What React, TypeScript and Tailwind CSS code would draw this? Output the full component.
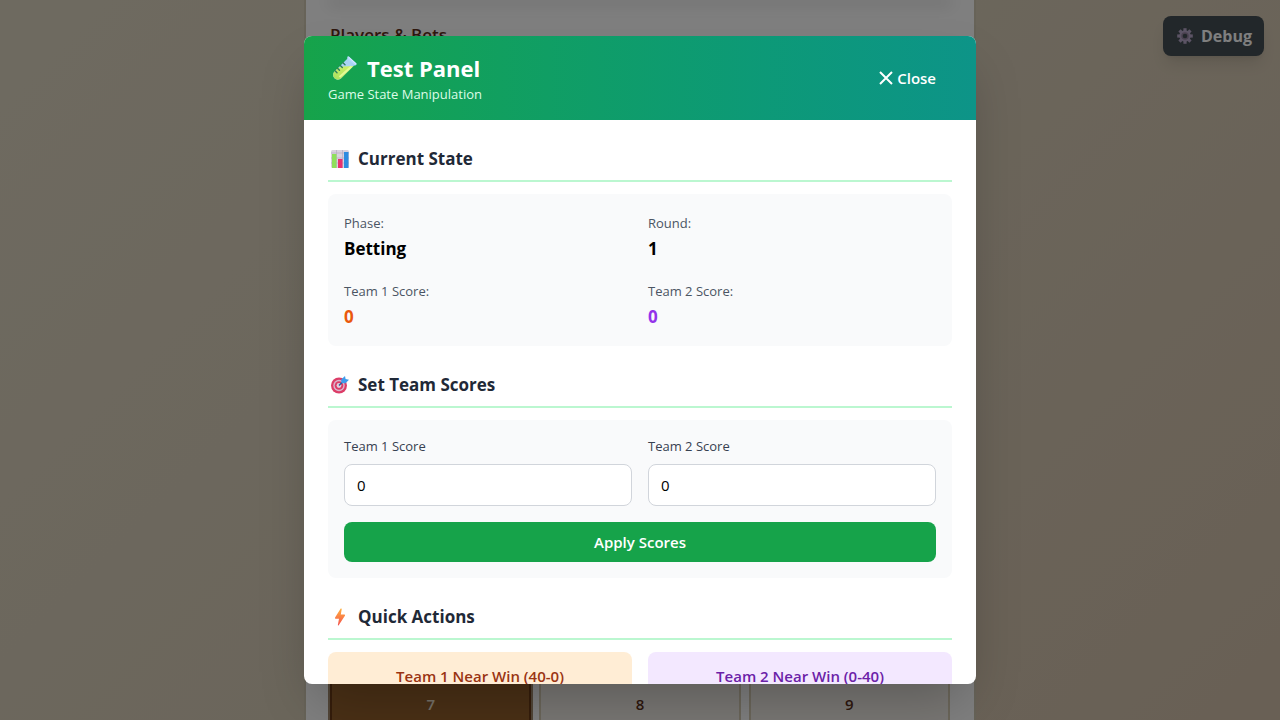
import { useState } from "react";
import type { ReactNode } from "react";

function TestTube() {
  return (
    <svg viewBox="0 0 24 24" className="ml-[5px] size-6" aria-hidden="true">
      <defs>
        <linearGradient id="tube" x1="0" y1="1" x2="1" y2="0">
          <stop offset="0" stopColor="#a8e05c" />
          <stop offset="1" stopColor="#d6f56c" />
        </linearGradient>
        <clipPath id="tube-shape">
          <path d="M14.500 2.500 21.500 9 8.200 22.300A4.700 4.700 0 0 1 1.500 15.600Z" />
        </clipPath>
      </defs>
      <g clipPath="url(#tube-shape)">
        <rect width="24" height="24" fill="#a9d3f3" />
        <path d="M0 14 9.500 10.500 24 10V24H0Z" fill="url(#tube)" />
        <path d="M18.500 10.500 6.500 21" stroke="#e3fb95" strokeWidth="2" />
      </g>
      <path d="M14.300.8Q15.300-.2 16.500 1L23.200 7Q24.300 8.300 23 9L21.800 9.800 14.300 3Z" fill="#b5d9ff" />
      <path d="m16 1.500 6.500 6" stroke="#dceeff" strokeWidth="1" strokeLinecap="round" />
      <path d="m10 6.700 2 2M7.300 9.500l2 2M4.500 12.200l2 2M2.300 15l1.700 1.700" stroke="#2f7d5c" strokeWidth="1.400" strokeLinecap="round" />
    </svg>
  );
}

function BarChart() {
  return (
    <svg viewBox="0 0 18 18" className="size-[18px]" aria-hidden="true">
      <rect width="18" height="18" rx="1.500" fill="#d9d2df" />
      <path d="M0 3h18M0 8h18M0 13h18M5.500 0v18M11.500 0v18" stroke="#b6acc2" strokeWidth=".7" />
      <rect x="1" y="4" width="4.500" height="14" fill="#8fe05c" />
      <rect x="7" y="9" width="4.500" height="9" fill="#e9316f" />
      <rect x="13" y="2" width="4.500" height="16" fill="#2f8ce0" />
    </svg>
  );
}

function Target() {
  return (
    <svg viewBox="0 0 18 18" className="size-[18px]" aria-hidden="true">
      <circle cx="8" cy="9.500" r="8" fill="#dc3d68" />
      <circle cx="8" cy="9.500" r="5.700" fill="#d9b8cf" />
      <circle cx="8" cy="9.500" r="4.300" fill="#dc3d68" />
      <circle cx="8" cy="9.500" r="2.400" fill="#e3cfe0" />
      <path d="m8 9.500 6-6" stroke="#235e9d" strokeWidth="1.400" />
      <path d="m10.500 7-.3-3.500L14 0l.6 2.900 3.400.8L14.500 7.200Z" fill="#3d9cec" />
    </svg>
  );
}

function Bolt() {
  return (
    <svg viewBox="0 0 18 18" className="size-[18px]" aria-hidden="true">
      <defs>
        <linearGradient id="bolt" x1="0" y1="0" x2="0" y2="1">
          <stop offset="0" stopColor="#ffb13d" />
          <stop offset="1" stopColor="#f4534f" />
        </linearGradient>
      </defs>
      <path
        d="M9.700.6Q10.800 0 10.700 1.200L9.800 6.600H13.500Q14.500 6.800 13.900 7.700L7.700 17.200Q6.700 18 6.900 16.800L8 10.700H4.500Q3.600 10.500 4.100 9.500Z"
        fill="url(#bolt)"
      />
    </svg>
  );
}

function Gear() {
  return (
    <svg viewBox="-8 -8 16 16" className="ml-0.5 size-4" aria-hidden="true">
      <g fill="#b8a8ca">
        <path d="M-1.600-7.800H1.600V7.800H-1.600Z" />
        <path d="M-1.600-7.800H1.600V7.800H-1.600Z" transform="rotate(45)" />
        <path d="M-1.600-7.800H1.600V7.800H-1.600Z" transform="rotate(90)" />
        <path d="M-1.600-7.800H1.600V7.800H-1.600Z" transform="rotate(135)" />
        <circle r="5.700" />
      </g>
      <circle r="3.800" fill="#94829f" />
      <circle r="2.300" fill="#444e54" />
    </svg>
  );
}

function Section({ icon, title, children }: { icon: ReactNode; title: string; children: ReactNode }) {
  return (
    <section>
      <h3 className="mb-3 flex items-center gap-2 border-b-2 border-[#bbf7d0] pb-[6px] text-[17px] leading-[30px] font-bold text-[#1f2937]">
        <span className="ml-0.5 flex w-5 justify-center">{icon}</span>
        {title}
      </h3>
      {children}
    </section>
  );
}

function Stat({ label, value, tone }: { label: string; value: string; tone: string }) {
  return (
    <div className="leading-[26px]">
      <p className="text-[13px] font-medium text-[#4b5563]">{label}</p>
      <p className={`text-[17px] font-bold ${tone}`}>{value}</p>
    </div>
  );
}

function ScoreField({ id, label }: { id: string; label: string }) {
  const [value, setValue] = useState("0");
  return (
    <div>
      <label htmlFor={id} className="mb-2 block text-[13px] leading-5 font-medium text-[#374151]">
        {label}
      </label>
      <input
        id={id}
        inputMode="numeric"
        value={value}
        onChange={(e) => setValue(e.target.value)}
        className="block w-full rounded-lg border border-[#d1d5db] bg-white px-3 py-2 text-[15px] leading-6 text-black"
      />
    </div>
  );
}

export default function App() {
  return (
    <div className="relative h-screen overflow-hidden bg-[linear-gradient(135deg,#ddd5c1_0%,#d7ccb7_50%,#d2c0aa_100%)] font-['Open_Sans','Noto_Sans',sans-serif]">
      <main className="mx-auto flex h-full max-w-[672px] flex-col justify-between border-x-2 border-[#cfc6b0] bg-white px-6">
        <div>
          <div className="h-0 rounded-b-xl shadow-[0_2px_16px_2px_rgba(0,0,0,0.25)]" />
          <h2 className="pt-5 text-[17px] leading-[30px] font-semibold text-[#5c2e1a]">Players &amp; Bets</h2>
        </div>
        <div className="-mb-[10px] grid grid-cols-3 gap-2 text-center text-[15px] leading-6 font-semibold text-[#5c2e1a]">
          <button className="border-2 border-[#6b3a16] bg-[#95602d] py-3 text-[#eee5d5] ring-2 ring-[#a58c70]">7</button>
          <button className="border-2 border-[#d6ccb4] bg-[#f3efe9] py-3">8</button>
          <button className="border-2 border-[#d6ccb4] bg-[#f3efe9] py-3">9</button>
        </div>
      </main>

      <button className="absolute top-4 right-4 flex h-10 items-center gap-2 rounded-lg bg-[#444e54] px-3 text-base font-bold text-white shadow-lg">
        <Gear />
        Debug
      </button>

      <div className="absolute inset-0 flex items-center justify-center bg-black/50 p-4">
        <div
          role="dialog"
          aria-labelledby="panel-title"
          className="flex max-h-[90vh] w-full max-w-2xl flex-col overflow-hidden rounded-lg bg-white shadow-2xl"
        >
          <header className="flex shrink-0 items-center justify-between bg-linear-to-r from-[#16a34a] to-[#0d9488] px-6 py-4 text-white">
            <div>
              <h2 id="panel-title" className="flex items-center gap-2.5 text-[22px] leading-8 font-bold">
                <TestTube />
                Test Panel
              </h2>
              <p className="text-[13px] leading-5 text-[#dcfce7]">Game State Manipulation</p>
            </div>
            <button className="flex items-center gap-1 px-4 py-2 text-[15px] leading-6 font-semibold">
              <svg viewBox="0 0 14 14" className="size-3.5" aria-hidden="true">
                <path d="m1 1 12 12M13 1 1 13" stroke="currentColor" strokeWidth="2" />
              </svg>
              Close
            </button>
          </header>

          <div className="min-h-0 flex-1 space-y-6 overflow-y-auto p-6 [scrollbar-width:none]">
            <Section icon={<BarChart />} title="Current State">
              <div className="grid grid-cols-2 gap-4 rounded-lg bg-[#f9fafb] p-4">
                <Stat label="Phase:" value="Betting" tone="text-black" />
                <Stat label="Round:" value="1" tone="text-black" />
                <Stat label="Team 1 Score:" value="0" tone="text-[#ea580c]" />
                <Stat label="Team 2 Score:" value="0" tone="text-[#9333ea]" />
              </div>
            </Section>

            <Section icon={<Target />} title="Set Team Scores">
              <div className="space-y-4 rounded-lg bg-[#f9fafb] p-4">
                <div className="grid grid-cols-2 gap-4">
                  <ScoreField id="team-1" label="Team 1 Score" />
                  <ScoreField id="team-2" label="Team 2 Score" />
                </div>
                <button className="block w-full rounded-lg bg-[#16a34a] px-4 py-2 text-[15px] leading-6 font-semibold text-white">
                  Apply Scores
                </button>
              </div>
            </Section>

            <Section icon={<Bolt />} title="Quick Actions">
              <div className="grid grid-cols-2 gap-4">
                <button className="rounded-lg bg-[#ffedd5] px-4 py-3 text-[15px] leading-6 font-semibold text-[#9a3412]">
                  Team 1 Near Win (40-0)
                </button>
                <button className="rounded-lg bg-[#f3e8ff] px-4 py-3 text-[15px] leading-6 font-semibold text-[#6b21a8]">
                  Team 2 Near Win (0-40)
                </button>
              </div>
            </Section>
          </div>
        </div>
      </div>
    </div>
  );
}
